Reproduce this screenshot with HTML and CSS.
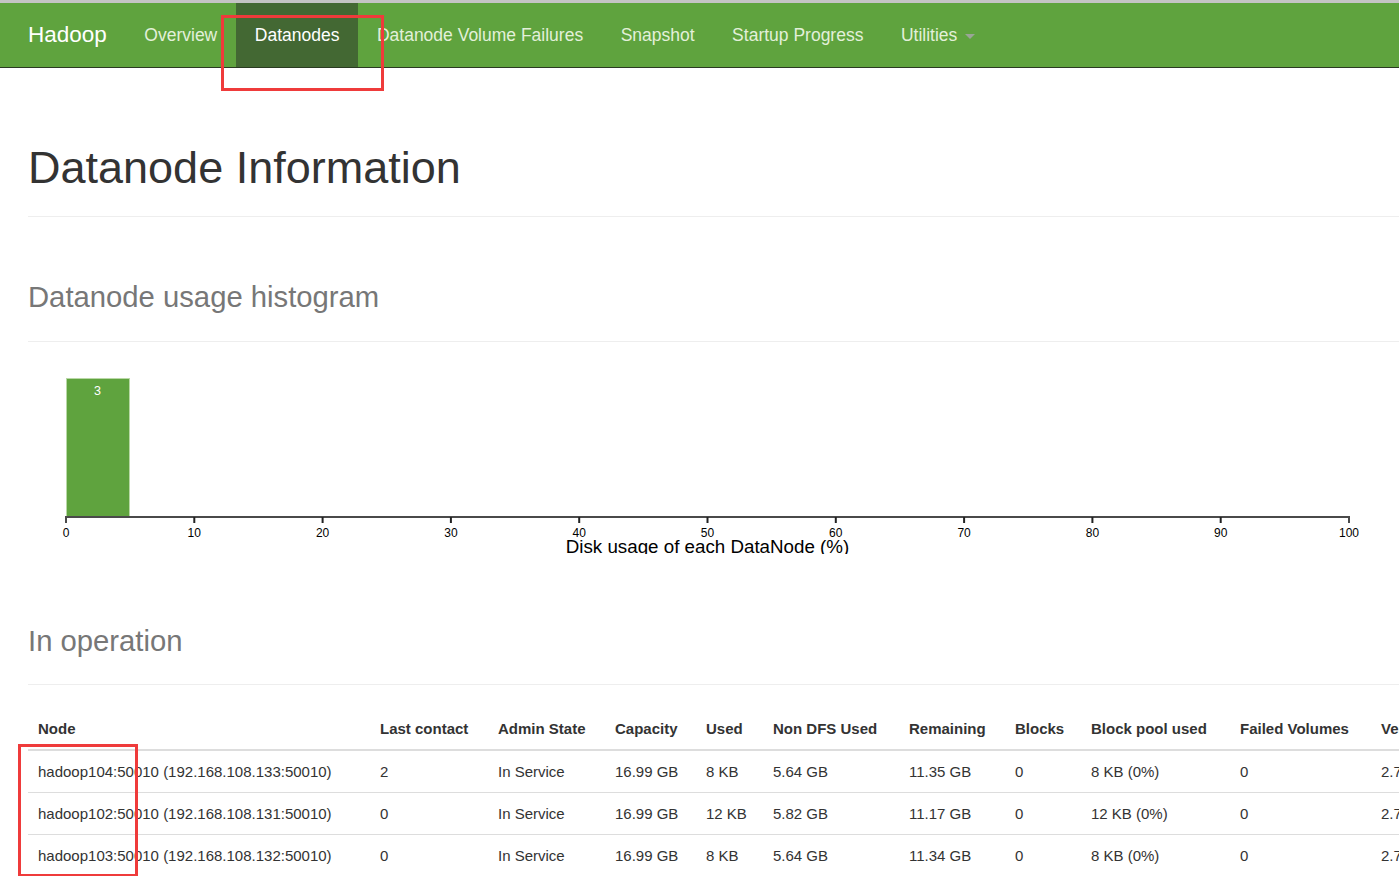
FILE: index.html
```html
<!DOCTYPE html>
<html>
<head>
<meta charset="utf-8">
<title>Datanode Information</title>
<link rel="stylesheet" href="styles.css">
</head>
<body>
<nav class="navbar">
  <a class="brand" href="#">Hadoop</a>
  <a class="nav-link" href="#">Overview</a>
  <a class="nav-link active" href="#">Datanodes</a>
  <a class="nav-link" href="#">Datanode Volume Failures</a>
  <a class="nav-link" href="#">Snapshot</a>
  <a class="nav-link" href="#">Startup Progress</a>
  <a class="nav-link" href="#">Utilities <span class="caret"></span></a>
</nav>

<main class="container">
  <div class="page-header">
    <h1 class="title">Datanode Information</h1>
  </div>

  <div class="page-header">
    <h1 class="title"><small class="sub">Datanode usage histogram</small></h1>
  </div>

  <div class="histogram">
    <svg class="chart" width="1371" height="212" viewBox="0 0 1371 212">
      <rect x="38.5" y="36.5" width="63" height="138.5" fill="#5fa33e" stroke="#b9d8a6" stroke-width="1"/>
      <text x="69.5" y="53" class="bar-label" text-anchor="middle">3</text>
      <path d="M38,181V175H1321V181" fill="none" stroke="#4a4a4a" stroke-width="2"/>
      <g stroke="#222" stroke-width="2">
        <line x1="166.3" y1="175" x2="166.3" y2="181"/>
        <line x1="294.6" y1="175" x2="294.6" y2="181"/>
        <line x1="422.9" y1="175" x2="422.9" y2="181"/>
        <line x1="551.2" y1="175" x2="551.2" y2="181"/>
        <line x1="679.5" y1="175" x2="679.5" y2="181"/>
        <line x1="807.8" y1="175" x2="807.8" y2="181"/>
        <line x1="936.1" y1="175" x2="936.1" y2="181"/>
        <line x1="1064.4" y1="175" x2="1064.4" y2="181"/>
        <line x1="1192.7" y1="175" x2="1192.7" y2="181"/>
      </g>
      <g class="tick-label" text-anchor="middle">
        <text x="38" y="195">0</text>
        <text x="166.3" y="195">10</text>
        <text x="294.6" y="195">20</text>
        <text x="422.9" y="195">30</text>
        <text x="551.2" y="195">40</text>
        <text x="679.5" y="195">50</text>
        <text x="807.8" y="195">60</text>
        <text x="936.1" y="195">70</text>
        <text x="1064.4" y="195">80</text>
        <text x="1192.7" y="195">90</text>
        <text x="1321" y="195">100</text>
      </g>
      <text x="679.5" y="211" class="axis-label" text-anchor="middle">Disk usage of each DataNode (%)</text>
    </svg>
  </div>

  <div class="page-header">
    <h1 class="title"><small class="sub">In operation</small></h1>
  </div>

  <table class="table">
    <colgroup>
      <col class="c-node"><col class="c-last"><col class="c-admin"><col class="c-cap"><col class="c-used"><col class="c-nondfs"><col class="c-rem"><col class="c-blocks"><col class="c-bpu"><col class="c-fv"><col class="c-ver">
    </colgroup>
    <thead>
      <tr>
        <th>Node</th><th>Last contact</th><th>Admin State</th><th>Capacity</th><th>Used</th><th>Non DFS Used</th><th>Remaining</th><th>Blocks</th><th>Block pool used</th><th>Failed Volumes</th><th>Version</th>
      </tr>
    </thead>
    <tbody>
      <tr>
        <td>hadoop104:50010 (192.168.108.133:50010)</td><td>2</td><td>In Service</td><td>16.99 GB</td><td>8 KB</td><td>5.64 GB</td><td>11.35 GB</td><td>0</td><td>8 KB (0%)</td><td>0</td><td>2.7.2</td>
      </tr>
      <tr>
        <td>hadoop102:50010 (192.168.108.131:50010)</td><td>0</td><td>In Service</td><td>16.99 GB</td><td>12 KB</td><td>5.82 GB</td><td>11.17 GB</td><td>0</td><td>12 KB (0%)</td><td>0</td><td>2.7.2</td>
      </tr>
      <tr>
        <td>hadoop103:50010 (192.168.108.132:50010)</td><td>0</td><td>In Service</td><td>16.99 GB</td><td>8 KB</td><td>5.64 GB</td><td>11.34 GB</td><td>0</td><td>8 KB (0%)</td><td>0</td><td>2.7.2</td>
      </tr>
    </tbody>
  </table>
</main>

<div class="mark mark-nav"></div>
<div class="mark mark-nodes"></div>
</body>
</html>
```

FILE: styles.css
```css
html, body {
  margin: 0;
  padding: 0;
  overflow: hidden;
  background: #fff;
}

body {
  font-family: "Liberation Sans", Arial, Helvetica, sans-serif;
  color: #333;
  font-size: 15px;
  width: 1600px;
  position: relative;
}

.navbar {
  display: flex;
  align-items: stretch;
  height: 64px;
  background: #5fa33e;
  border-top: 3px solid #c4c4c4;
  border-bottom: 1px solid #2a3a22;
  padding-left: 28px;
}

.brand {
  display: flex;
  align-items: center;
  font-size: 22.5px;
  color: #fff;
  text-decoration: none;
  margin-right: 18.75px;
}

.nav-link {
  display: flex;
  align-items: center;
  padding: 0 18.75px;
  font-size: 17.5px;
  color: #e3f0da;
  text-decoration: none;
}

.nav-link.active {
  background: #436833;
  color: #fff;
}

.caret {
  display: inline-block;
  width: 0;
  height: 0;
  margin-left: 8px;
  margin-top: 3px;
  border-top: 5px solid #9aa596;
  border-left: 5px solid transparent;
  border-right: 5px solid transparent;
}

.container {
  padding: 25px 0 0 28px;
}

.page-header {
  margin: 50px 0 25px;
  padding-bottom: 11.25px;
  border-bottom: 1px solid #eee;
}

.title {
  margin: 0 0 12.5px;
  font-size: 45px;
  font-weight: 500;
  line-height: 49.5px;
  color: #333;
}

.sub {
  font-size: 65%;
  line-height: 1;
  color: #777;
}

.histogram {
  margin-top: -25px;
  padding-bottom: 7px;
}

.chart {
  display: block;
  overflow: hidden;
}

.bar-label {
  font-family: "Liberation Sans", Arial, sans-serif;
  font-size: 12.5px;
  fill: #fff;
}

.tick-label {
  font-family: "Liberation Sans", Arial, sans-serif;
  font-size: 12px;
  fill: #000;
}

.axis-label {
  font-family: "Liberation Sans", Arial, sans-serif;
  font-size: 18.75px;
  fill: #000;
}

.table {
  border-collapse: collapse;
  border-spacing: 0;
  table-layout: fixed;
  width: 1463px;
}

.table th,
.table td {
  padding: 10px;
  line-height: 21px;
  text-align: left;
  vertical-align: top;
  white-space: nowrap;
  overflow: hidden;
}

.table th {
  padding-top: 8px;
  font-weight: bold;
  border-bottom: 2px solid #ddd;
}

.table td {
  border-top: 1px solid #ddd;
}

.c-node { width: 342px; }
.c-last { width: 118px; }
.c-admin { width: 117px; }
.c-cap { width: 91px; }
.c-used { width: 67px; }
.c-nondfs { width: 136px; }
.c-rem { width: 106px; }
.c-blocks { width: 76px; }
.c-bpu { width: 149px; }
.c-fv { width: 141px; }
.c-ver { width: 120px; }

.mark {
  position: absolute;
  border: 3px solid #ef3b3b;
  box-sizing: border-box;
}

.mark-nav {
  left: 221px;
  top: 15px;
  width: 163px;
  height: 76px;
}

.mark-nodes {
  left: 18px;
  top: 744px;
  width: 120px;
  height: 133px;
}
```
